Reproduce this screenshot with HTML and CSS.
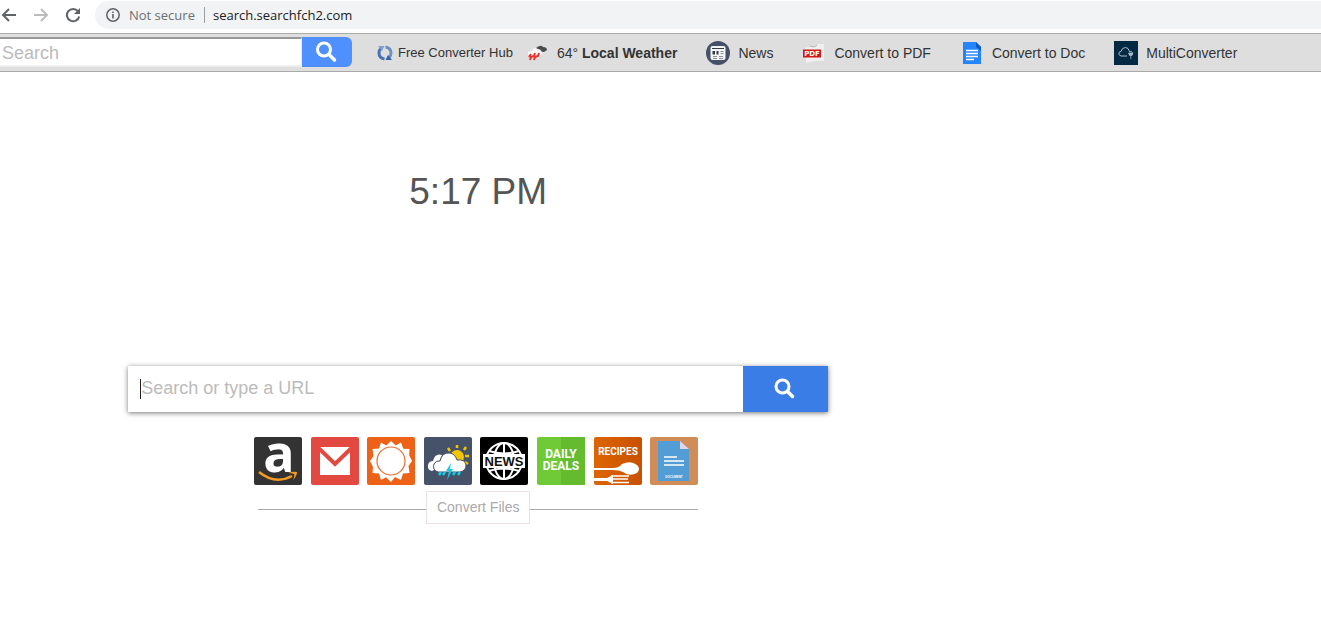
FILE: index.html
```html
<!DOCTYPE html>
<html lang="en">
<head>
<meta charset="utf-8">
<title>search.searchfch2.com</title>
<link rel="stylesheet" href="styles.css">
</head>
<body>
<header class="browser">
  <nav class="browser-nav">
    <button class="nav-btn" aria-label="Back"><svg width="16" height="16" viewBox="0 0 16 16" fill="none" stroke="#5f6368" stroke-width="2"><path d="M15 8H2M8 2 2 8l6 6"/></svg></button>
    <button class="nav-btn" aria-label="Forward"><svg width="16" height="16" viewBox="0 0 16 16" fill="none" stroke="#bbbdbf" stroke-width="2"><path d="M1 8h13M8 2l6 6-6 6"/></svg></button>
    <button class="nav-btn" aria-label="Reload"><svg width="16" height="16" viewBox="0 0 16 16"><path d="M13 4.200A6.200 6.200 0 1 0 14.200 9.500" fill="none" stroke="#5f6368" stroke-width="2"/><path d="M15 1v6H9z" fill="#5f6368"/></svg></button>
  </nav>
  <div class="omnibox">
    <svg width="14" height="14" viewBox="0 0 14 14"><circle cx="7" cy="7" r="6.200" fill="none" stroke="#5f6368" stroke-width="1.500"/><path d="M6.200 6h1.600v4.500H6.200zM6.200 3.400h1.600V5H6.200z" fill="#5f6368"/></svg>
    <span class="security">Not secure</span>
    <span class="address">search.searchfch2.com</span>
  </div>
</header>

<div class="toolbar">
  <form class="bar-search">
    <input class="bar-input" type="text" placeholder="Search" aria-label="Search">
    <button class="bar-button" type="button" aria-label="Search"><svg width="22" height="22" viewBox="0 0 22 22" fill="none" stroke="#fff" stroke-linecap="round"><circle cx="8" cy="8.500" r="6.500" stroke-width="3"/><path d="m13 13.500 5.500 5.500" stroke-width="3.500"/></svg></button>
  </form>
  <nav class="links">
    <a class="link link-small" href="#"><svg width="16" height="16" viewBox="0 0 16 16" fill="none" stroke-width="3"><path d="M7.500 14Q2 13 2 8q0-3 2-4.500" stroke="#4773b5"/><path d="M1 1h6.500L5 6z" fill="#7f9fcd"/><path d="M8.500 2Q14 3 14 8q0 3-2 4.500" stroke="#6b90c4"/><path d="M15 15H8.500L11 10z" fill="#3264b0"/></svg>Free Converter Hub</a>
    <a class="link link-weather" href="#"><svg width="24" height="24" viewBox="0 0 24 24"><path d="M11 7q5-4 7-1 4 0 4 3l-3 2-8-1z" fill="#4c4c4c"/><path d="M3 14q-1-4 4-4 2-5 6-2 3 0 4 4 0 3-5 2z" fill="#f8f8f8"/><path d="m6 13-2 3M10 12l-1 3-3 1-1 3M14 12l-1 3-3 1-1 3" stroke="#e63230" stroke-width="2" fill="none"/></svg><span>64° <b>Local Weather</b></span></a>
    <a class="link" href="#"><svg width="24" height="24" viewBox="0 0 24 24"><circle cx="12" cy="12" r="12" fill="#465169"/><rect x="4.500" y="5" width="15" height="14" rx="2" fill="#f4f4f4"/><path d="M6 7.500h12" stroke="#343b48"/><path d="M6.500 10h2.500v3.500H6.500zM10.500 10h2v3.500h-2z" fill="#343b48"/><path d="M14.500 10.500h3M14.500 12.500h3M7 15.500h4M13 15.500h4M7 17.500h4M13 17.500h4" stroke="#8b919c"/></svg>News</a>
    <a class="link" href="#"><svg width="24" height="24" viewBox="0 0 24 24"><path d="M3 6q9 1 13-3h6v17q-8-1-18 2z" fill="#efefef"/><path d="M8 5q5 2 7-1" stroke="#b5b5b5" fill="none"/><rect x="1" y="8.500" width="18" height="8" fill="#d01616"/><text x="10" y="15" class="pdf-text">PDF</text></svg>Convert to PDF</a>
    <a class="link" href="#"><svg width="24" height="24" viewBox="0 0 24 24"><path d="M3 1h13l5 5v17H3z" fill="#2684fc"/><path d="M16 1l5 5v4l-5-4z" fill="#0b5cc8"/><path d="M6 9.500h12M6 12.500h12M6 15.500h12M6 18.500h8" stroke="#fff" stroke-width="1.500"/></svg>Convert to Doc</a>
    <a class="link" href="#"><svg width="24" height="24" viewBox="0 0 24 24"><path fill="#022a43" d="M0 0h24v24H0z"/><path d="M13 15H7q-3-1-2-3.500 1-1 2-1 1-4 4.500-4 3 0 4 4 3 0 3 1" fill="none" stroke="#aebbc4"/><path d="M14.500 12h4.500l-1 2.500h-2.500zM16.800 14v4" fill="#aebbc4" stroke="#aebbc4" stroke-width=".7"/></svg>MultiConverter</a>
  </nav>
</div>

<main class="page">
  <div class="clock">5:17 PM</div>
  <form class="main-search">
    <div class="main-field"><input class="main-input" type="text" placeholder="Search or type a URL" aria-label="Search or type a URL"></div>
    <button class="main-button" type="button" aria-label="Search"><svg width="22" height="22" viewBox="0 0 22 22" fill="none" stroke="#fff" stroke-linecap="round"><circle cx="8.500" cy="8.500" r="6.500" stroke-width="3"/><path d="m13.500 13.500 5 5" stroke-width="3.500"/></svg></button>
  </form>
  <nav class="tiles">
    <a class="tile" href="#" aria-label="Amazon"><svg viewBox="0 0 48 48"><rect width="48" height="48" rx="2" fill="#333"/><text x="25" y="35" class="amazon-text">a</text><path d="M5 35q16 13 33 4" fill="none" stroke="#f49b20" stroke-width="2.500"/><path d="M34 36q5-2 9-1 0 4-4 8 2-4 1-6-2-1-6-1z" fill="#f49b20"/></svg></a>
    <a class="tile" href="#" aria-label="Gmail"><svg viewBox="0 0 48 48"><rect width="48" height="48" rx="2" fill="#e24a41"/><path d="M9 10h30v28H9z" fill="#fff"/><path d="M8 11.500 24 27l16-15.500" fill="none" stroke="#e24a41" stroke-width="4"/><path d="M12 10h24L24 21.500z" fill="#fff"/></svg></a>
    <a class="tile" href="#" aria-label="Sun"><svg viewBox="0 0 48 48"><rect width="48" height="48" rx="2" fill="#ed6217"/><path fill="#fff" d="m24 4 4.700 4.500L34 5.500l2.300 6.200 6.200.3-.3 6.200L45 24l-3.500 5 1 7-6.500.5L34 43l-6-3-4 5-5-4.700-5 2.700-2-6.500-6.500-.5.500-6L3 24l3.500-5-1-7 6.500-.5L14 5.500l5.300 3z"/><circle cx="24" cy="24" r="14" fill="#fff" stroke="#e96b32" stroke-width="1.200"/></svg></a>
    <a class="tile" href="#" aria-label="Weather"><svg viewBox="0 0 48 48"><rect width="48" height="48" rx="2" fill="#465269"/><g stroke="#f3c500" stroke-width="2.500"><path d="M33 11V8M26 14l-2-3M40 13l2-3M41 19h4M41 25l3 2"/></g><circle cx="33" cy="20" r="7" fill="#f3c500"/><path d="M8 34q-5-1-4-6 1-4 5-4 2-8 9-6l-6 14z" fill="#fff"/><path d="M14 35q-6-2-4-8 2-4 6-3 2-9 10-8 5 1 7 7 8-1 9 5 0 6-6 7z" fill="#fff" stroke="#465269"/><path d="M27 26l-5 8h3l-2 9 6-11h-3z" fill="#12cbe5"/><path d="m17 35-2 3M21 35l-2 3M31 35l-2 3M36 35l-2 3" stroke="#12cbe5" stroke-width="2.500"/></svg></a>
    <a class="tile" href="#" aria-label="News"><svg viewBox="0 0 48 48"><rect width="48" height="48" rx="2"/><g fill="none" stroke="#fff" stroke-width="2"><circle cx="24" cy="24" r="18"/><ellipse cx="24" cy="24" rx="10" ry="18"/><path d="M24 5v38M9 14q15 5 30 0M9 34q15-5 30 0"/></g><rect x="3" y="17" width="42" height="14" fill="#fff"/><text x="24" y="29" class="news-text">NEWS</text></svg></a>
    <a class="tile" href="#" aria-label="Daily Deals"><svg viewBox="0 0 48 48"><rect width="48" height="48" rx="2" fill="#70c936"/><path fill="#64bb30" d="M24 0h24v48H24z"/><text x="24" y="21" class="deals-text">DAILY</text><text x="24" y="33" class="deals-text">DEALS</text></svg></a>
    <a class="tile" href="#" aria-label="Recipes"><svg viewBox="0 0 48 48"><defs><linearGradient id="orange"><stop stop-color="#dd6500"/><stop offset="1" stop-color="#c85100"/></linearGradient></defs><rect width="48" height="48" rx="2" fill="url(#orange)"/><text x="24" y="18" class="recipes-text">RECIPES</text><path d="M0 31h19q6 0 9-4 9-4 15 1 4 4 0 8-8 4-14-1-4-2-10-2H0z" fill="#fff"/><path d="M17 39h18M19 42h15M17 45.500h18" fill="none" stroke="#fff" stroke-width="1.700"/><path d="M0 41h13l6-3v9l-6-3H0z" fill="#fff"/></svg></a>
    <a class="tile" href="#" aria-label="Document"><svg viewBox="0 0 48 48"><rect width="48" height="48" rx="2" fill="#d18d57"/><path d="M8 4h22l9 8v32H8z" fill="#529dd5"/><path d="M30 4l9 8h-9z" fill="#dfd5eb"/><path d="M14 20h13M14 24h20M14 28h20" stroke="#fff" stroke-width="1.600"/><text x="24" y="41" class="doc-text">DOCUMENT</text></svg></a>
  </nav>
  <div class="divider"><button class="convert" type="button">Convert Files</button></div>
</main>
</body>
</html>
```

FILE: styles.css
```css
* { box-sizing: border-box; }
body { margin: 0; background: #fff; font-family: "Liberation Sans", Arial, sans-serif; color: #333; }
button { border: 0; padding: 0; background: none; font-family: inherit; }
svg { display: block; flex: none; }

.browser { display: flex; align-items: center; height: 33px; padding: 0 0 3px; }
.browser-nav { display: flex; gap: 16px; margin-right: 14px; padding-left: 1px; }
.nav-btn { width: 16px; height: 16px; }
.omnibox { flex: 1; display: flex; align-items: center; height: 28px; padding-left: 11px; border-radius: 14px 0 0 14px; background: #f1f3f4; font: 13px/18px "Open Sans", sans-serif; }
.security { margin-left: 9px; padding-right: 9px; border-right: 1px solid #9b9ea2; color: #6b6f74; line-height: 16px; }
.address { margin-left: 8px; color: #202124; }

.toolbar { display: flex; align-items: center; height: 39px; border-top: 1px solid #aaa; border-bottom: 1px solid #aaa; background: #dedede; }
.bar-search { display: flex; width: 352px; height: 30px; margin: 0 25px 1px 0; }
.bar-input { flex: 1; min-width: 0; border: 0; border-top: 2px solid #999; border-right: 1px solid #eee; border-bottom: 2px solid #eee; padding: 2px 2px 0; background: #fff; font: 18px/24px "Liberation Sans", Arial, sans-serif; }
input::placeholder { color: #bbb; opacity: 1; }
.bar-button { display: flex; align-items: center; justify-content: center; width: 50px; border-radius: 0 6px 6px 0; background: #4d90fe; }
.links { display: flex; align-items: center; gap: 29px; white-space: nowrap; }
.link { display: flex; align-items: center; gap: 8px; color: #333; font-size: 14px; line-height: 20px; text-decoration: none; }
.link-small { gap: 5px; margin-right: -17px; font-size: 13px; }

.page { width: 72.400%; padding: 98px 0 0; display: flex; flex-direction: column; align-items: center; }
.clock { color: #555; font-size: 37px; line-height: 44px; }
.main-search { display: flex; width: 73.200%; height: 46px; margin-top: 152px; box-shadow: 0 1px 5px #777; }
.main-field { flex: 1; display: flex; align-items: center; padding: 0 12px; background: #fff; }
.main-input { flex: 1; height: 20px; padding: 0 0 2px; border: 0; border-left: 1px solid #222; outline: 0; font: 18px/18px "Liberation Sans", Arial, sans-serif; }
.main-button { display: flex; align-items: center; justify-content: center; width: 85px; padding-right: 2px; background: #3b7de7; }
.tiles { display: flex; justify-content: space-between; width: 444px; margin: 25px 4px 0 0; }
.tile { width: 48px; height: 48px; }
.tile svg { overflow: visible; }
.divider { display: flex; align-items: center; width: 440px; margin-top: 6px; }
.divider::before, .divider::after { content: ""; flex: 1; height: 1px; margin-top: 4px; background: #aaa; }
.convert { height: 33px; padding: 0 10px 1px; border: 1px solid #ecdfe5; background: #fff; color: #aaa; font-size: 14px; }

text { text-anchor: middle; fill: #fff; }
.pdf-text { font: bold 7px "DejaVu Sans", sans-serif; }
.amazon-text { font: bold 52px "Open Sans", sans-serif; }
.news-text { font: bold 13px "Liberation Sans", sans-serif; fill: #111; }
.deals-text { font: bold 12px Roboto, sans-serif; }
.recipes-text { font: bold 10px Roboto, sans-serif; }
.doc-text { font: bold 3px "Liberation Sans", sans-serif; }
```
